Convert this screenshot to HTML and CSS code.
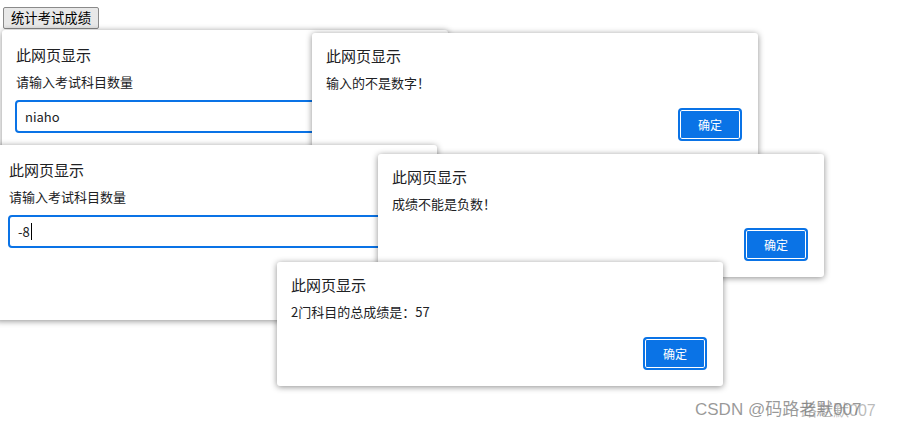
FILE: index.html
```
<!DOCTYPE html>
<html lang="zh-CN">
<head>
    <meta charset="utf-8">
    <title>统计考试成绩</title>
    <link rel="stylesheet" href="styles.css">
</head>
<body>
    <div class="desk">
        <button class="pagebtn">统计考试成绩</button>

        <!-- prompt: 科目数量 (niaho) -->
        <div class="dlg d1">
            <div class="dlg-title">此网页显示</div>
            <div class="dlg-msg">请输入考试科目数量</div>
            <div class="dlg-input">niaho</div>
        </div>

        <!-- alert: 不是数字 -->
        <div class="dlg d2">
            <div class="dlg-title">此网页显示</div>
            <div class="dlg-msg">输入的不是数字！</div>
            <div class="dlg-foot">
                <span class="okbtn">确定</span>
            </div>
        </div>

        <!-- prompt: -8 -->
        <div class="dlg d3">
            <div class="dlg-title">此网页显示</div>
            <div class="dlg-msg">请输入考试科目数量</div>
            <div class="dlg-input">-8<span class="caret"></span></div>
        </div>

        <!-- alert: 负数 -->
        <div class="dlg d4">
            <div class="dlg-title">此网页显示</div>
            <div class="dlg-msg">成绩不能是负数！</div>
            <div class="dlg-foot">
                <span class="okbtn">确定</span>
            </div>
        </div>

        <!-- alert: result -->
        <div class="dlg d5">
            <div class="dlg-title">此网页显示</div>
            <div class="dlg-msg">2门科目的总成绩是：57</div>
            <div class="dlg-foot">
                <span class="okbtn">确定</span>
            </div>
        </div>

        <div class="mark">CSDN @码路老默007<span class="mark2">路老默007</span></div>
    </div>
</body>
</html>
```

FILE: styles.css
```
html,body{
    margin:0;
    padding:0;
    background:#fff;
    overflow:hidden;
}
.desk{
    position:relative;
    width:897px;
    height:428px;
    font-family:"Noto Sans CJK SC","Microsoft YaHei",sans-serif;
    color:#202124;
}
.pagebtn{
    margin:7px 0 0 3px;
    height:22px;
    padding:0 7px;
    font:13.33px "Noto Sans CJK SC",sans-serif;
    line-height:20px;
    color:#000;
    background:#e8e8e8;
    border:1px solid #8a8a8a;
    border-radius:2px;
}

/* dialogs sit like windows on top of each other */
.dlg{
    position:absolute;
    box-sizing:border-box;
    width:446px;
    padding:13px 16px 16px 14px;
    background:#fff;
    border-radius:3px;
    box-shadow:0 1px 6px rgba(0,0,0,.45);
    display:flex;
    flex-direction:column;
}
.d1{ left:2px; top:30px; height:175px; }
.d2{ left:312px; top:33px; height:124px; }
.d3{ left:-5px; top:145px; width:442px; height:175px; }
.d4{ left:378px; top:154px; height:123px; }
.d5{ left:277px; top:262px; height:124px; }

.d1 .dlg-title,.d3 .dlg-title{
    margin-top:2px;
}
.dlg-title{
    font-size:15px;
    line-height:20px;
}
.dlg-msg{
    margin-top:8px;
    font-size:13px;
    line-height:18px;
}
.dlg-input{
    margin-top:9px;
    margin-left:-1px;
    box-sizing:border-box;
    height:33px;
    padding:0 8px;
    border:2px solid #0a73e6;
    border-radius:4px;
    font-size:13px;
    line-height:29px;
    display:flex;
    align-items:center;
}
.caret{
    display:inline-block;
    width:1px;
    height:17px;
    margin-left:1px;
    background:#000;
}
.dlg-foot{
    margin-top:auto;
    display:flex;
    justify-content:flex-end;
}
.okbtn{
    box-sizing:border-box;
    width:64px;
    height:33px;
    border-radius:4px;
    font-size:12px;
    display:flex;
    align-items:center;
    justify-content:center;
    color:#fff;
    background:#0a73e6;
    border:2px solid #0a73e6;
    box-shadow:inset 0 0 0 1px #fff;
}

.mark{
    position:absolute;
    left:695px;
    top:398px;
    font-family:"Liberation Sans","Noto Sans CJK SC",sans-serif;
    font-size:17px;
    line-height:24px;
    color:rgba(120,120,120,.75);
    white-space:nowrap;
}
.mark2{
    position:absolute;
    left:106px;
    top:1px;
    font-size:16px;
    color:rgba(120,120,120,.5);
}
```
